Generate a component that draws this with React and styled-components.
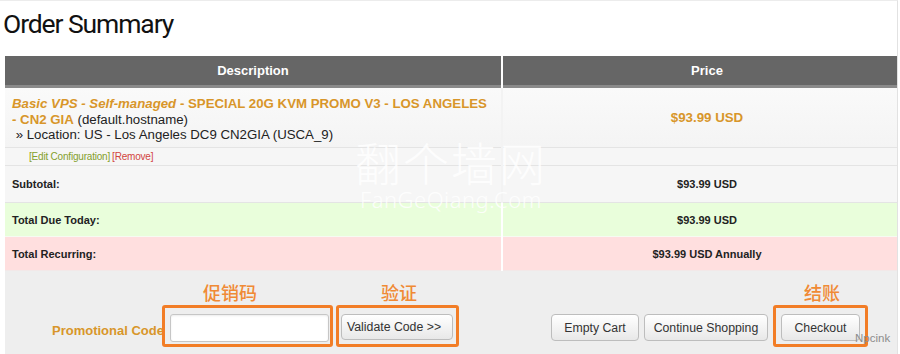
import React from "react";
import styled, { createGlobalStyle } from "styled-components";

const Global = createGlobalStyle`
  html, body { margin: 0; padding: 0; background: #fff; }
  body { font-family: "Liberation Sans", Arial, sans-serif; }
  * { box-sizing: border-box; }
`;

const ORANGE = "#d8962a";
const MARK = "#f27d26";

const Page = styled.div`
  position: relative;
  width: 898px;
  height: 354px;
  overflow: hidden;
  border-top: 1px solid #ececec;
  border-right: 1px solid #e2e2e2;
`;

const TitleBar = styled.div`
  height: 55px;
  padding: 10px 0 0 3px;
`;

const Title = styled.h1`
  margin: 0;
  font-family: Roboto, "Open Sans", sans-serif;
  font-weight: 400;
  font-size: 26.5px;
  line-height: 26px;
  letter-spacing: -1.1px;
  color: #111;
`;

const Table = styled.div`
  margin-left: 5px;
  width: 906px;
`;

const Row = styled.div`
  display: grid;
  grid-template-columns: 496px 408px;
  column-gap: 2px;
  height: ${(p) => p.$h}px;
  background: ${(p) => p.$gap || "#fff"};
`;

const HeadCell = styled.div`
  background: #666;
  border-bottom: 3px solid #8a8a8a;
  color: #fff;
  font-weight: 700;
  font-size: 13px;
  line-height: 29px;
  text-align: center;
`;

const Cell = styled.div`
  display: flex;
  align-items: ${(p) => (p.$top ? "flex-start" : "center")};
  justify-content: ${(p) => (p.$center ? "center" : "flex-start")};
  background: ${(p) => p.$bg || "#f6f6f6"};
  border-bottom: 1px solid ${(p) => p.$line || "#e4e4e4"};
  padding: ${(p) => p.$pad || "0 0 0 7px"};
  color: #222;
  font-size: ${(p) => p.$fs || 11}px;
  font-weight: ${(p) => (p.$bold ? 700 : 400)};
`;

const Desc = styled.div`
  font-size: 13.25px;
  line-height: 15.5px;
  color: #222;
`;

const Name = styled.span`
  color: ${ORANGE};
  font-weight: 700;
`;

const Group = styled.em`
  font-style: italic;
`;

const Price = styled.span`
  color: ${ORANGE};
  font-weight: 700;
  font-size: 13.3px;
`;

const LinkText = styled.span`
  font-size: 10px;
  color: ${(p) => p.$color};
  margin-right: 2px;
  letter-spacing: -0.2px;
`;

const Panel = styled.div`
  display: flex;
  align-items: flex-start;
  height: 83px;
  padding: 34px 0 0 47px;
  background: #eeeeee;
`;

const PromoLabel = styled.span`
  margin-top: 18px;
  font-size: 13px;
  line-height: 16px;
  font-weight: 700;
  color: ${ORANGE};
  white-space: nowrap;
`;

const Mark = styled.div`
  position: relative;
  display: flex;
  border: 3px solid ${MARK};
  border-radius: 3px;
  padding: ${(p) => p.$pad};
  margin-left: ${(p) => p.$ml || 0}px;
`;

const MarkLabel = styled.span`
  position: absolute;
  top: -27px;
  left: ${(p) => p.$left}px;
  font-family: "Noto Sans CJK SC", sans-serif;
  font-size: 18px;
  line-height: 22px;
  font-weight: 500;
  color: #f08a35;
  white-space: nowrap;
`;

const CodeInput = styled.input`
  width: 159px;
  height: 28px;
  border: 1px solid #c6c6c6;
  border-radius: 3px;
  background: #fff;
  box-shadow: inset 0 1px 2px rgba(0, 0, 0, 0.08);
  outline: none;
`;

const Btn = styled.button`
  width: ${(p) => p.$w}px;
  height: ${(p) => p.$h || 27}px;
  margin-left: ${(p) => p.$ml || 0}px;
  margin-top: ${(p) => p.$mt || 0}px;
  padding: ${(p) => (p.$left ? "0 0 0 5px" : "0")};
  text-align: ${(p) => (p.$left ? "left" : "center")};
  border: 1px solid #bdbdbd;
  border-radius: 4px;
  background: linear-gradient(#ffffff, #e8e8e8);
  color: #333;
  font-family: "Liberation Sans", Arial, sans-serif;
  font-size: 12.3px;
  white-space: nowrap;
`;

const RightGroup = styled.div`
  display: flex;
  align-items: flex-start;
  margin-left: 92px;
`;

const Watermark = styled.div`
  position: absolute;
  left: 355px;
  top: 133px;
  display: flex;
  flex-direction: column;
  align-items: center;
  color: rgba(255, 255, 255, 0.85);
  pointer-events: none;
`;

const WmBig = styled.span`
  font-family: "Noto Sans CJK SC", sans-serif;
  font-weight: 300;
  font-size: 46px;
  line-height: 54px;
  letter-spacing: 2px;
`;

const WmSmall = styled.span`
  font-family: "Noto Sans", sans-serif;
  font-weight: 300;
  font-size: 22px;
  line-height: 22px;
  letter-spacing: 0.5px;
`;

const Credit = styled.span`
  position: absolute;
  left: 855px;
  top: 331px;
  font-size: 11.5px;
  color: #8c8c8c;
`;

export default function App() {
  return (
    <>
      <Global />
      <Page>
        <TitleBar>
          <Title>Order Summary</Title>
        </TitleBar>
        <Table>
          <Row $h={32}>
            <HeadCell>Description</HeadCell>
            <HeadCell>Price</HeadCell>
          </Row>
          <Row $h={60} $gap="#f3f3f3">
            <Cell $top $pad="8px 6px 0 7px" $bg="linear-gradient(#fafafa, #f4f4f4)">
              <Desc>
                <Name>
                  <Group>Basic VPS - Self-managed</Group> - SPECIAL 20G KVM PROMO V3 - LOS ANGELES
                  <br />- CN2 GIA
                </Name>{" "}
                (default.hostname)
                <br />
                &nbsp;» Location: US - Los Angeles DC9 CN2GIA (USCA_9)
              </Desc>
            </Cell>
            <Cell $center $pad="0" $bg="linear-gradient(#fafafa, #f4f4f4)">
              <Price>$93.99 USD</Price>
            </Cell>
          </Row>
          <Row $h={18} $gap="#f3f3f3">
            <Cell $pad="0 0 0 24px">
              <LinkText $color="#84a02c">[Edit Configuration]</LinkText>
              <LinkText $color="#d2443f">[Remove]</LinkText>
            </Cell>
            <Cell $pad="0" />
          </Row>
          <Row $h={37} $gap="#f3f3f3">
            <Cell $bold>Subtotal:</Cell>
            <Cell $bold $center $pad="0">$93.99 USD</Cell>
          </Row>
          <Row $h={34}>
            <Cell $bold $bg="#e9fedb" $line="#f6fbf2">Total Due Today:</Cell>
            <Cell $bold $center $pad="0" $bg="#e9fedb" $line="#f6fbf2">$93.99 USD</Cell>
          </Row>
          <Row $h={34}>
            <Cell $bold $bg="#ffdfdf" $line="#f2e8e8">Total Recurring:</Cell>
            <Cell $bold $center $pad="0" $bg="#ffdfdf" $line="#f2e8e8">$93.99 USD Annually</Cell>
          </Row>
          <Panel>
            <PromoLabel>Promotional Code</PromoLabel>
            <Mark $pad="6px 1px 2px 5px" $ml={-2}>
              <MarkLabel $left={38}>促销码</MarkLabel>
              <CodeInput type="text" />
            </Mark>
            <Mark $pad="6px 3px 4px 2px" $ml={3}>
              <MarkLabel $left={42}>验证</MarkLabel>
              <Btn $w={112} $h={26} $left>Validate Code &gt;&gt;</Btn>
            </Mark>
            <RightGroup>
              <Btn $w={88} $mt={9}>Empty Cart</Btn>
              <Btn $w={124} $mt={9} $ml={5}>Continue Shopping</Btn>
              <Mark $pad="6px 5px 3px 5px" $ml={5}>
                <MarkLabel $left={28}>结账</MarkLabel>
                <Btn $w={79}>Checkout</Btn>
              </Mark>
            </RightGroup>
          </Panel>
        </Table>
        <Watermark>
          <WmBig>翻个墙网</WmBig>
          <WmSmall>FanGeQiang.Com</WmSmall>
        </Watermark>
        <Credit>Npcink</Credit>
      </Page>
    </>
  );
}
